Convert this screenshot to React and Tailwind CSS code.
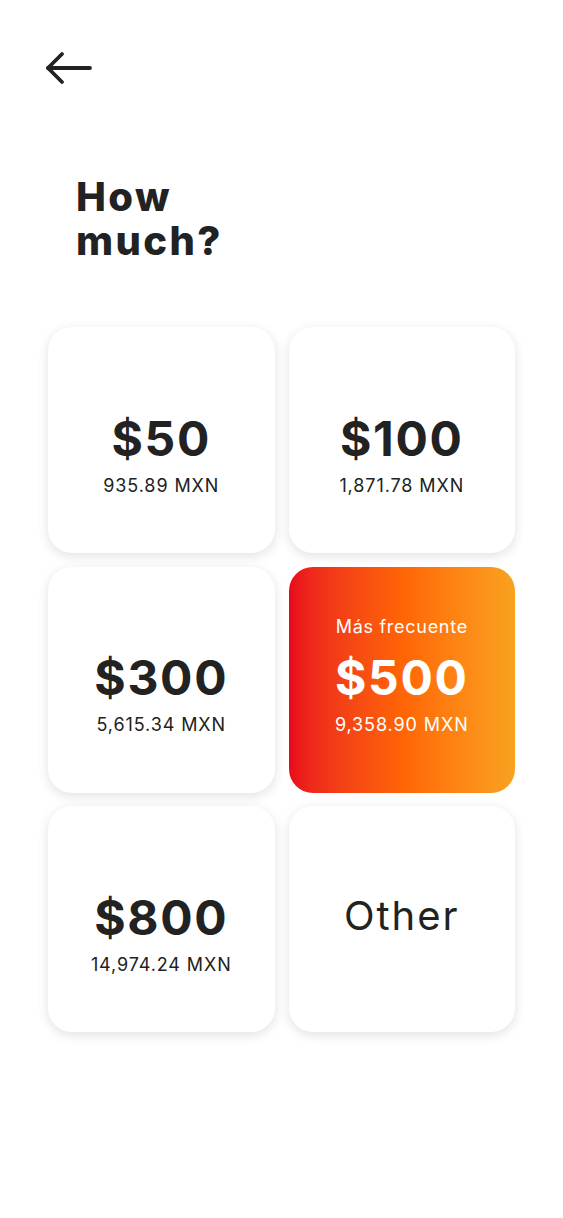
import { useState } from 'react'

const AMOUNTS = [
  { id: 50, label: '$50', mxn: '935.89 MXN' },
  { id: 100, label: '$100', mxn: '1,871.78 MXN' },
  { id: 300, label: '$300', mxn: '5,615.34 MXN' },
  { id: 500, label: '$500', mxn: '9,358.90 MXN', popular: true },
  { id: 800, label: '$800', mxn: '14,974.24 MXN' },
]

function BackArrow() {
  return (
    <svg width="48" height="34" viewBox="0 0 48 34" fill="none" stroke="#222" strokeWidth="3.8" strokeLinecap="round" strokeLinejoin="round">
      <path d="M45 17H3" />
      <path d="M17 3L3 17l14 14" />
    </svg>
  )
}

export default function App() {
  const [selected, setSelected] = useState(500)

  return (
    <main className="min-h-screen bg-white text-[#222] font-['Inter',sans-serif]">
      <div className="pl-[45px] pt-[51px]">
        <button className="block">
          <BackArrow />
        </button>
      </div>

      <h1 className="pl-[76px] mt-[90px] text-[40px] leading-[44px] font-extrabold tracking-[0.06em]">
        How<br />much?
      </h1>

      <div className="grid grid-cols-2 gap-x-3.5 gap-y-[13.5px] px-12 mt-[64px]">
        {AMOUNTS.map(a => {
          const on = a.popular
          return (
            <button
              key={a.id}
              onClick={() => setSelected(a.id)}
              className={`h-[226px] rounded-[24px] flex flex-col items-center justify-center pb-[7px] ${
                on
                  ? 'bg-gradient-to-r from-[#e9061c] via-[#ff6405] to-[#f8a21f] text-white'
                  : 'bg-white shadow-[0_3px_12px_rgba(0,0,0,0.12)]'
              }`}
            >
              <span className={`text-[18px] leading-[24px] tracking-[0.04em] ${on ? '' : 'invisible'}`}>Más frecuente</span>
              <span className="text-[48px] leading-[52px] font-bold mt-[13px] tracking-[0.035em]">{a.label}</span>
              <span className="text-[18px] leading-[24px] mt-[9px] tracking-[0.05em]">{a.mxn}</span>
            </button>
          )
        })}
        <button
          onClick={() => setSelected('other')}
          className="h-[226px] rounded-[24px] bg-white shadow-[0_3px_12px_rgba(0,0,0,0.12)] flex items-center justify-center"
        >
          <span className="text-[40px] leading-none tracking-[0.05em] -mt-[6px]">Other</span>
        </button>
      </div>
    </main>
  )
}
